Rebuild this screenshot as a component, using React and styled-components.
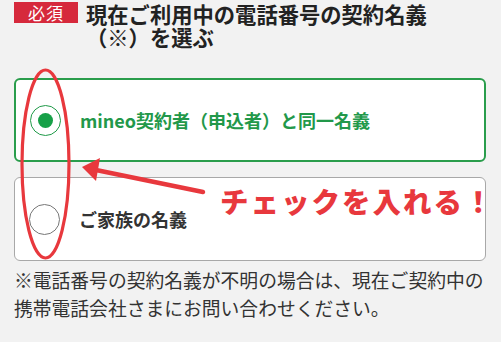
import React, { useState } from "react";
import styled, { createGlobalStyle } from "styled-components";

const GlobalStyle = createGlobalStyle`
  html, body {
    margin: 0;
    background: #f2f2f2;
  }
  body {
    font-family: "Noto Sans CJK JP", "Noto Sans", sans-serif;
    color: #333;
  }
`;

const options = [
  { id: "self", label: "mineo契約者（申込者）と同一名義" },
  { id: "family", label: "ご家族の名義" },
];

const App = () => {
  const [selected, setSelected] = useState("self");

  return (
    <>
      <GlobalStyle />
      <Page>
        <Header>
          <Badge>必須</Badge>
          <Title>
            現在ご利用中の電話番号の契約名義
            <br />
            （※）を選ぶ
          </Title>
        </Header>

        <OptionList>
          {options.map((opt) => (
            <OptionCard
              key={opt.id}
              $active={selected === opt.id}
              onClick={() => setSelected(opt.id)}
            >
              <Radio $active={selected === opt.id} />
              <OptionLabel $active={selected === opt.id}>{opt.label}</OptionLabel>
            </OptionCard>
          ))}
        </OptionList>

        <Note>
          ※電話番号の契約名義が不明の場合は、現在ご契約中の
          <br />
          携帯電話会社さまにお問い合わせください。
        </Note>

        {/* 注釈（赤い丸と矢印） */}
        <Marks viewBox="0 0 501 342">
          <ellipse
            cx="45.5"
            cy="164"
            rx="23.5"
            ry="94"
            fill="none"
            stroke="#e8383d"
            strokeWidth="3.2"
          />
          <line
            x1="203"
            y1="192"
            x2="96"
            y2="170"
            stroke="#e8383d"
            strokeWidth="4.5"
            strokeLinecap="round"
          />
          <polygon points="82,167 100,158 96,181" fill="#e8383d" />
        </Marks>
        <Callout>チェックを入れる！</Callout>
      </Page>
    </>
  );
};

export default App;

const Page = styled.div`
  position: relative;
  width: 501px;
  height: 342px;
  box-sizing: border-box;
  padding: 2px 15px 0 14px;
  overflow: hidden;
`;

const Header = styled.div`
  display: flex;
  align-items: flex-start;
  gap: 8px;
`;

const Badge = styled.span`
  flex: none;
  width: 64px;
  height: 21px;
  background: #d6293c;
  color: #fff;
  font-size: 17px;
  line-height: 21px;
  text-align: center;
  letter-spacing: 1px;
`;

const Title = styled.h1`
  margin: 0;
  font-size: 21.3px;
  line-height: 23px;
  font-weight: 700;
  color: #222;
`;

const OptionList = styled.div`
  display: flex;
  flex-direction: column;
  gap: 15px;
  margin-top: 30px;
`;

const OptionCard = styled.div`
  display: flex;
  align-items: center;
  gap: 19px;
  height: 84px;
  box-sizing: border-box;
  padding-left: 14px;
  background: #fff;
  border: ${(p) => (p.$active ? "2px solid #2a9d4c" : "1.5px solid #a8a8a8")};
  border-radius: 6px;
  cursor: pointer;
`;

const Radio = styled.span`
  position: relative;
  flex: none;
  width: 31px;
  height: 31px;
  box-sizing: border-box;
  border-radius: 50%;
  border: 1.5px solid ${(p) => (p.$active ? "#1f9a48" : "#777")};

  &::after {
    content: "";
    display: ${(p) => (p.$active ? "block" : "none")};
    position: absolute;
    top: 50%;
    left: 50%;
    width: 15px;
    height: 15px;
    margin: -7.5px 0 0 -7.5px;
    border-radius: 50%;
    background: #17a048;
  }
`;

const OptionLabel = styled.span`
  font-size: 18px;
  font-weight: 700;
  color: ${(p) => (p.$active ? "#22984a" : "#333")};
`;

const Note = styled.p`
  margin: 5px 0 0;
  font-size: 18.8px;
  line-height: 28px;
  color: #333;
  white-space: nowrap;
`;

const Marks = styled.svg`
  position: absolute;
  top: 0;
  left: 0;
  width: 501px;
  height: 342px;
  pointer-events: none;
`;

const Callout = styled.div`
  position: absolute;
  left: 220px;
  top: 183px;
  font-size: 28.5px;
  line-height: 36px;
  font-weight: 900;
  letter-spacing: 2px;
  color: #e8383d;
  white-space: nowrap;
  pointer-events: none;
`;
